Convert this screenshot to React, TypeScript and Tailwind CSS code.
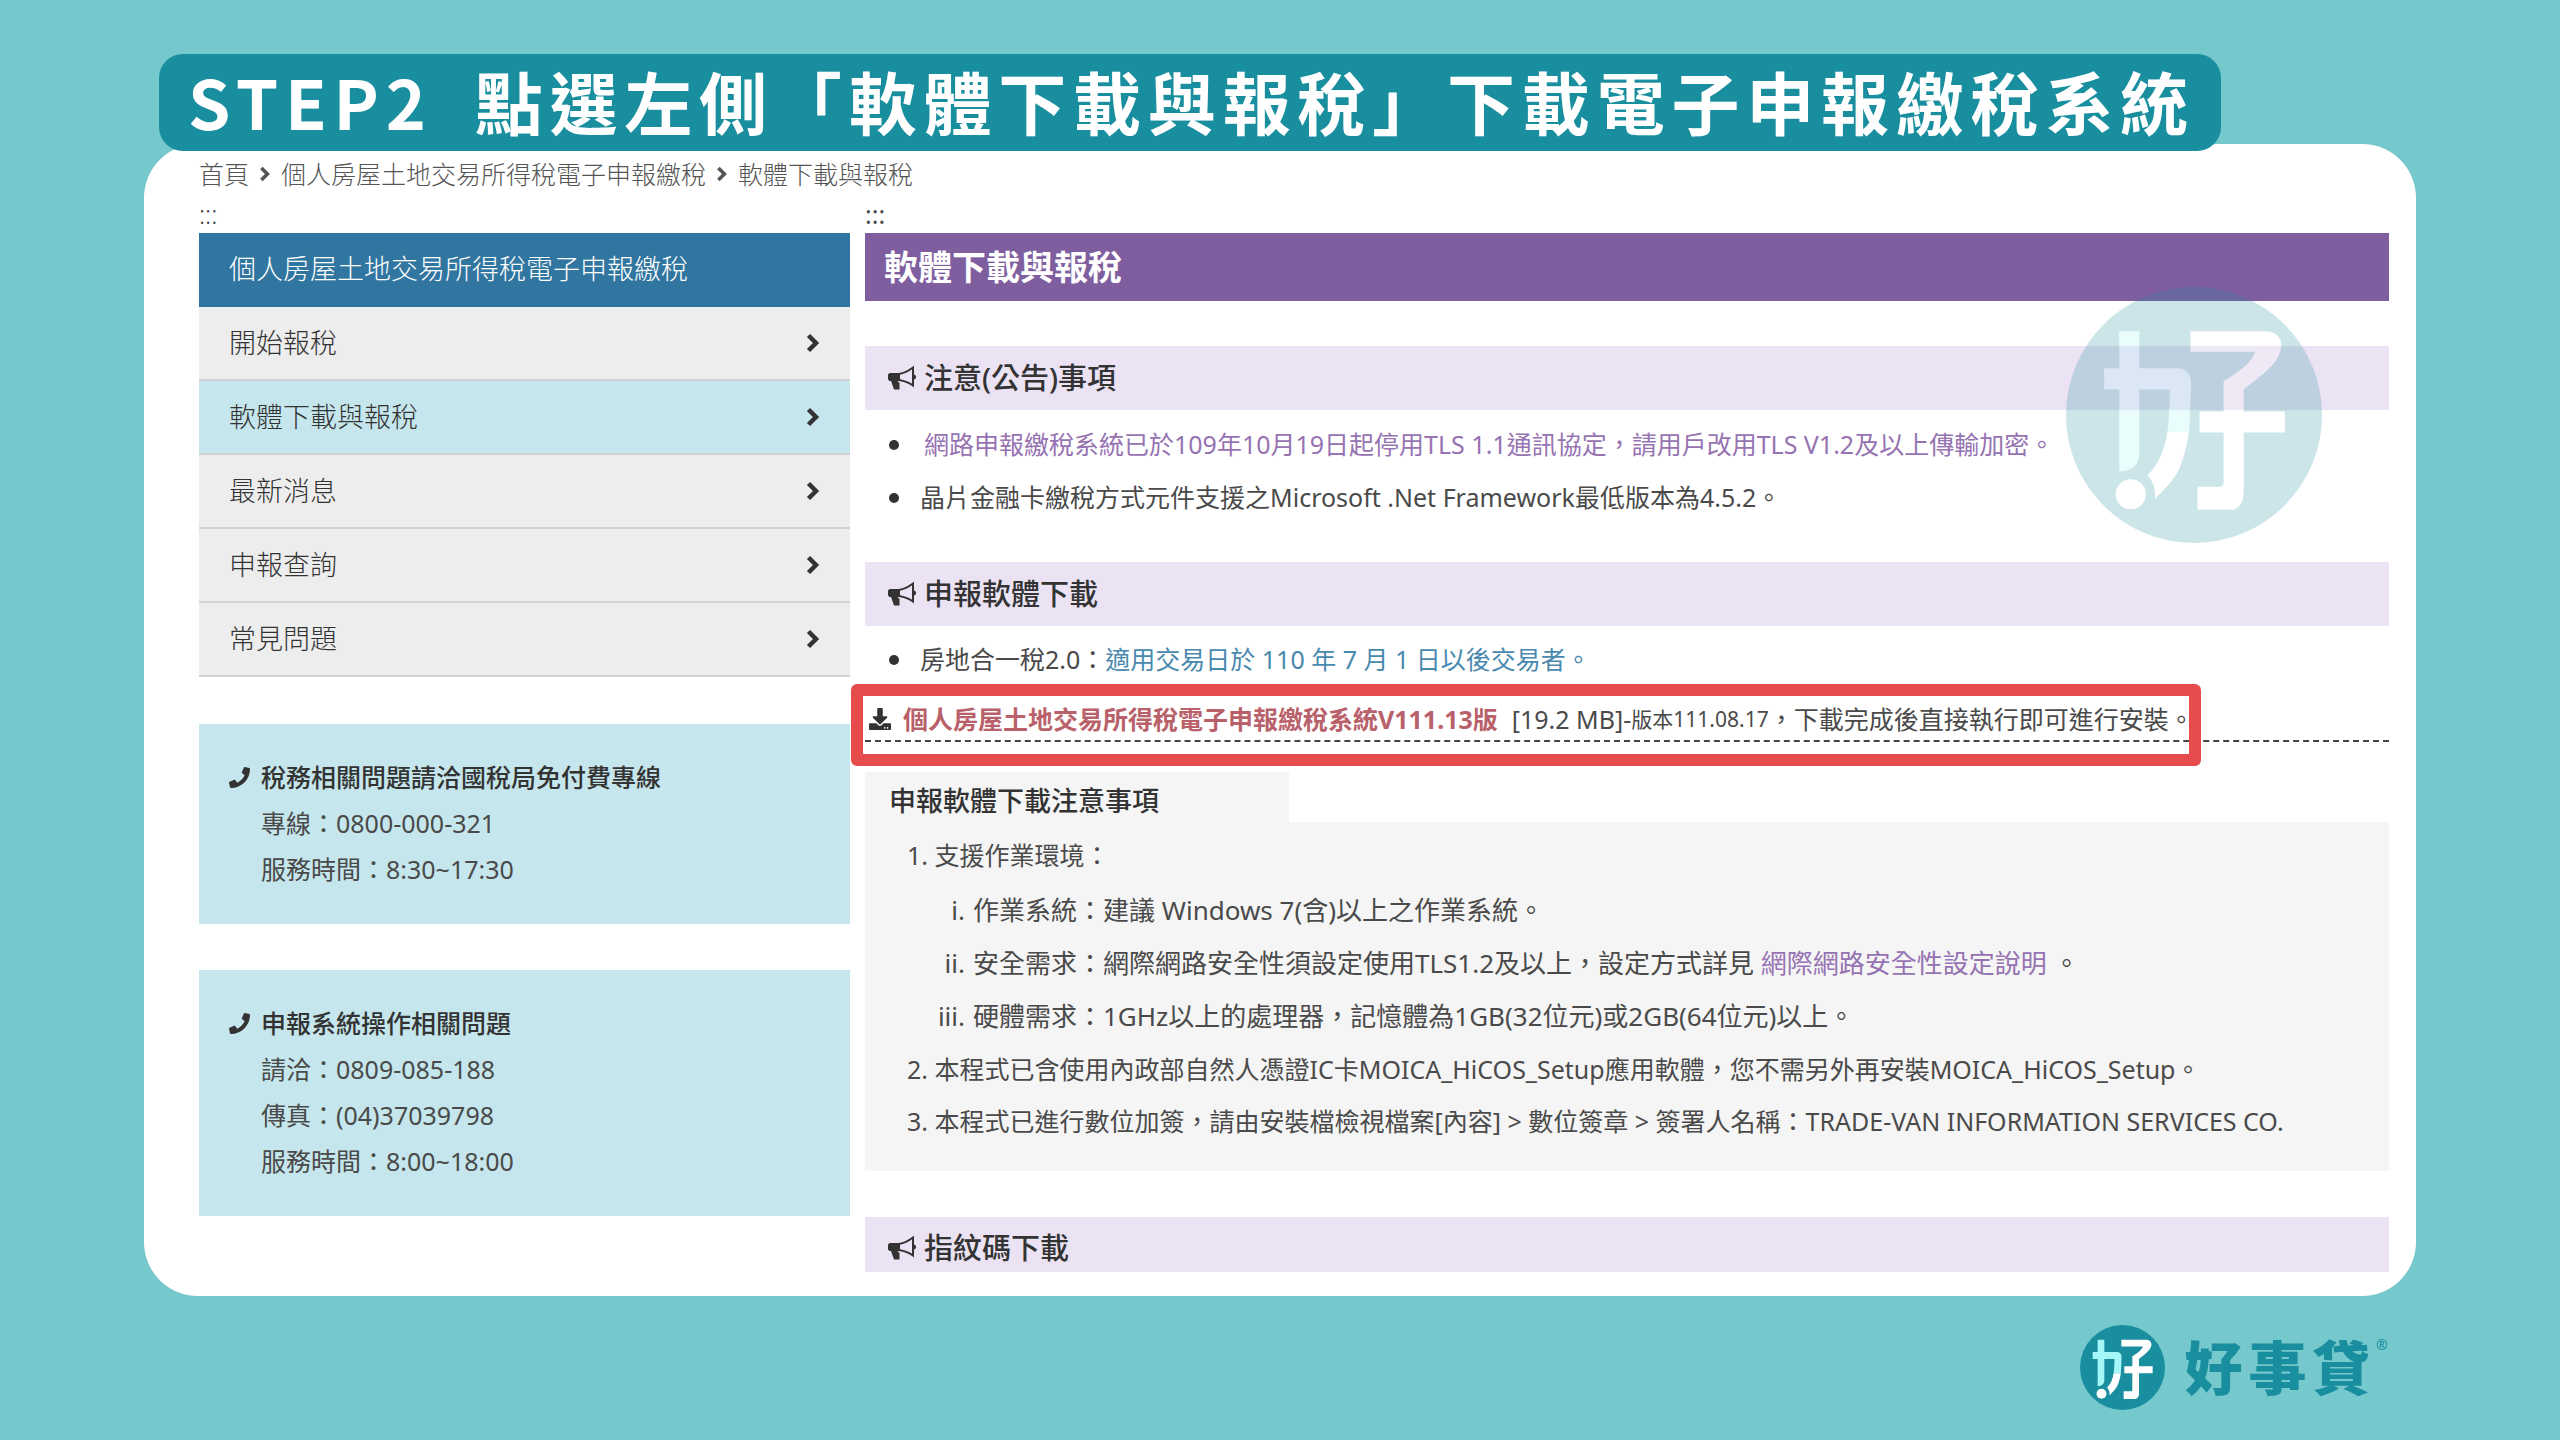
import type { ReactNode } from 'react'
import { FaDownload, FaPhone } from 'react-icons/fa'

const MENU = [
  { label: '開始報稅', active: false },
  { label: '軟體下載與報稅', active: true },
  { label: '最新消息', active: false },
  { label: '申報查詢', active: false },
  { label: '常見問題', active: false },
]

const CONTACTS = [
  {
    title: '稅務相關問題請洽國稅局免付費專線',
    lines: ['專線：0800-000-321', '服務時間：8:30~17:30'],
  },
  {
    title: '申報系統操作相關問題',
    lines: ['請洽：0809-085-188', '傳真：(04)37039798', '服務時間：8:00~18:00'],
  },
]

function BrandMark({ className }: { className: string }) {
  return (
    <svg viewBox="0 0 255 255" className={className} aria-hidden="true">
      <circle cx="127.5" cy="127.5" r="127.5" fill="#198e9e" />
      <path
        fill="#a5f7f7"
        d="M53 44h20v37h38c8 0 13 5 13.500 13c0 18-1 34-2 50.500h-21.500c1.500-14 2.500-28 2.500-42.500H73v64c0 10-6 17.500-20 17.500V102H38V81h15z"
      />
      <path fill="#fff" d="M101 144.500h21.500c-2 14-5 25-9 35c-5 12-15 21-25 32c1-9-1-17-7.500-24c11-10 17-25 20-43z" />
      <circle cx="64.500" cy="206.500" r="15" fill="#fff" />
      <path
        fill="#fff"
        d="M124 44h74c10 0 16 5 16.500 14c-1 18-20 30-37.500 44v22h41v21h-41v59c0 11-5 18-13 18h-33v-23h22c3 0 4-2 4-5v-49h-24v-21h24V94c14-9 28-18 31.500-29.500H124z"
      />
    </svg>
  )
}

function Chevron({ className }: { className: string }) {
  return (
    <svg viewBox="0 0 14 20" className={`shrink-0 ${className}`} aria-hidden="true">
      <path fill="none" stroke="currentColor" strokeWidth="4.500" d="M2.500 2.500L10 10l-7.500 7.500" />
    </svg>
  )
}

function Megaphone() {
  return (
    <svg viewBox="0 0 28 24" className="h-6 w-7 shrink-0" aria-hidden="true">
      <path fill="#333" d="M1.500 7H12v8h-2.500l2 2v6.500H6L3 15H1.500L0 13.500v-5z" />
      <path fill="none" stroke="#333" strokeWidth="2" d="M11 8c6-1 10-3.500 14-6.500v18c-4-3-8-4.500-14-5.500" />
      <path fill="#333" d="M25 8.500h1.500L28 10v2l-1.500 1.500H25z" />
    </svg>
  )
}

function SectionTitle({ children, className = 'h-16' }: { children: ReactNode; className?: string }) {
  return (
    <h3 className={`flex items-center gap-2 bg-[#ebe3f4] pl-[23px] text-[29px] font-medium text-[#333] ${className}`}>
      <Megaphone />
      {children}
    </h3>
  )
}

function Sidebar() {
  return (
    <aside className="w-[651px] shrink-0">
      <p className="text-[25px] leading-[37px] text-[#444]">:::</p>
      <h2 className="flex h-[74px] items-center bg-[#3176a0] px-[30px] pb-0.5 text-[27px] text-white">
        個人房屋土地交易所得稅電子申報繳稅
      </h2>
      <nav>
        {MENU.map((item) => (
          <a
            key={item.label}
            href="#"
            className={[
              'flex h-[74px] items-center justify-between border-b-2 border-[#d2d2d2] px-[30px] text-[27px] text-[#333]',
              item.active ? 'bg-[#c5e6ec]' : 'bg-[#ededed]',
            ].join(' ')}
          >
            {item.label}
            <Chevron className="h-5 w-3.5 text-[#333]" />
          </a>
        ))}
      </nav>
      <div className="mt-[47px] flex flex-col gap-[46px]">
        {CONTACTS.map((c) => (
          <section key={c.title} className="bg-[#c5e6ec] px-[30px] pt-[30px] pb-8 text-[25px] leading-[46px] font-normal text-[#4a4a4a]">
            <h3 className="flex items-center gap-[11px] font-medium text-[#333]">
              <FaPhone className="size-[21px]" />
              {c.title}
            </h3>
            {c.lines.map((line) => (
              <p key={line} className="pl-8">{line}</p>
            ))}
          </section>
        ))}
      </div>
    </aside>
  )
}

function Bullet({ children }: { children: ReactNode }) {
  return (
    <li className="flex items-center gap-[21px]">
      <span className="size-2.5 shrink-0 rounded-full bg-[#333]" />
      <span className="whitespace-nowrap">{children}</span>
    </li>
  )
}

function Content() {
  return (
    <main className="min-w-0 flex-1 text-[25px] font-normal text-[#4a4a4a]">
      <p className="leading-[37px]">:::</p>
      <h1 className="flex h-[68px] items-center bg-[#7f5ea0] px-[19px] text-[34px] font-bold text-white">軟體下載與報稅</h1>

      <section className="mt-[45px]">
        <SectionTitle>注意(公告)事項</SectionTitle>
        <ul className="mt-2 pl-6 leading-[53px]">
          <Bullet>
            <a href="#" className="pl-1 text-[#9673b2]">
              網路申報繳稅系統已於109年10月19日起停用TLS 1.1通訊協定，請用戶改用TLS V1.2及以上傳輸加密。
            </a>
          </Bullet>
          <Bullet>晶片金融卡繳稅方式元件支援之Microsoft .Net Framework最低版本為4.5.2。</Bullet>
        </ul>
      </section>

      <section className="mt-[38px]">
        <SectionTitle>申報軟體下載</SectionTitle>
        <ul className="mt-[7px] pl-6 leading-[53px]">
          <Bullet>
            房地合一稅2.0：
            <a href="#" className="text-[#4a89ae]">適用交易日於 110 年 7 月 1 日以後交易者。</a>
          </Bullet>
        </ul>

        <div className="relative mt-3.5 border-b-2 border-dashed border-[#444] pb-0.5 pl-1">
          <p className="flex items-center whitespace-nowrap leading-[38px]">
            <FaDownload className="mr-3 size-[22px] text-[#333]" />
            <a href="#" className="font-bold text-[#b9616a]">個人房屋土地交易所得稅電子申報繳稅系統V111.13版</a>
            <span className="ml-3.5">[19.2 MB]-</span>
            <span className="text-[21px]">版本111.08.17</span>
            <span>，下載完成後直接執行即可進行安裝。</span>
          </p>
          <div className="absolute -left-3.5 -top-4 h-[82px] w-[1350px] rounded-md border-[12px] border-[#e64c4c]" />
        </div>

        <h4 className="mt-[30px] flex h-[50px] w-[424px] items-center bg-[#f5f5f5] pl-6 pt-2 text-[27px] font-medium text-[#333]">
          申報軟體下載注意事項
        </h4>
        <ol className="bg-[#f5f5f5] pb-6 pl-[42px] pt-[7px] leading-[52px] whitespace-nowrap">
          <li>
            1. 支援作業環境：
            <ol className="pt-[3px] pl-0.5 text-[26px] leading-[53px]">
              <li className="flex gap-2">
                <span className="w-14 text-right">i.</span>
                <span>作業系統：建議 Windows 7(含)以上之作業系統。</span>
              </li>
              <li className="flex gap-2">
                <span className="w-14 text-right">ii.</span>
                <span>
                  安全需求：網際網路安全性須設定使用TLS1.2及以上，設定方式詳見{' '}
                  <a href="#" className="text-[#9673b2]">網際網路安全性設定說明</a> 。
                </span>
              </li>
              <li className="flex gap-2">
                <span className="w-14 text-right">iii.</span>
                <span>硬體需求：1GHz以上的處理器，記憶體為1GB(32位元)或2GB(64位元)以上。</span>
              </li>
            </ol>
          </li>
          <li>2. 本程式已含使用內政部自然人憑證IC卡MOICA_HiCOS_Setup應用軟體，您不需另外再安裝MOICA_HiCOS_Setup。</li>
          <li>3. 本程式已進行數位加簽，請由安裝檔檢視檔案[內容] &gt; 數位簽章 &gt; 簽署人名稱：TRADE-VAN INFORMATION SERVICES CO.</li>
        </ol>
      </section>

      <section className="mt-[46px]">
        <SectionTitle className="h-[55px] pt-1.5">指紋碼下載</SectionTitle>
      </section>
    </main>
  )
}

export default function App() {
  return (
    <div
      lang="zh-TW"
      className="flex min-h-screen flex-col bg-[#75c8cc] px-36 pt-[54px] font-light font-['Noto_Sans','Noto_Sans_CJK_TC',sans-serif]"
    >
      <header className="z-10 ml-[15px] flex items-center gap-[42px] self-start rounded-3xl bg-[#198e9e] pr-[26px] pb-1 pl-[29px] text-[68px] leading-[93px] font-bold tracking-widest whitespace-nowrap text-white font-['Noto_Sans_CJK_TC',sans-serif]">
        <span>STEP2</span>
        <span>點選左側「軟體下載與報稅」下載電子申報繳稅系統</span>
      </header>

      <div className="relative -mt-[7px] rounded-[54px] bg-white pt-2.5 pr-[27px] pb-6 pl-[55px]">
        <nav className="mb-0.5 flex items-center gap-2.5 text-[25px] leading-10 text-[#555]">
          <a href="#">首頁</a>
          <Chevron className="h-4 w-3" />
          <a href="#">個人房屋土地交易所得稅電子申報繳稅</a>
          <Chevron className="h-4 w-3" />
          <span>軟體下載與報稅</span>
        </nav>
        <div className="flex gap-[15px]">
          <Sidebar />
          <Content />
        </div>
        <BrandMark className="absolute top-[143px] right-[94px] size-64 opacity-[0.22]" />
      </div>

      <footer className="mt-[29px] flex items-center justify-end pr-7 text-[#198e9e]">
        <BrandMark className="size-[85px]" />
        <p className="ml-5 flex items-start">
          <span className="pb-1 text-[58px] leading-[81px] font-black tracking-widest font-['Noto_Sans_CJK_TC',sans-serif]">
            好事貸
          </span>
          <span className="w-3 pt-2.5 text-sm leading-5 font-medium">®</span>
        </p>
      </footer>
    </div>
  )
}
